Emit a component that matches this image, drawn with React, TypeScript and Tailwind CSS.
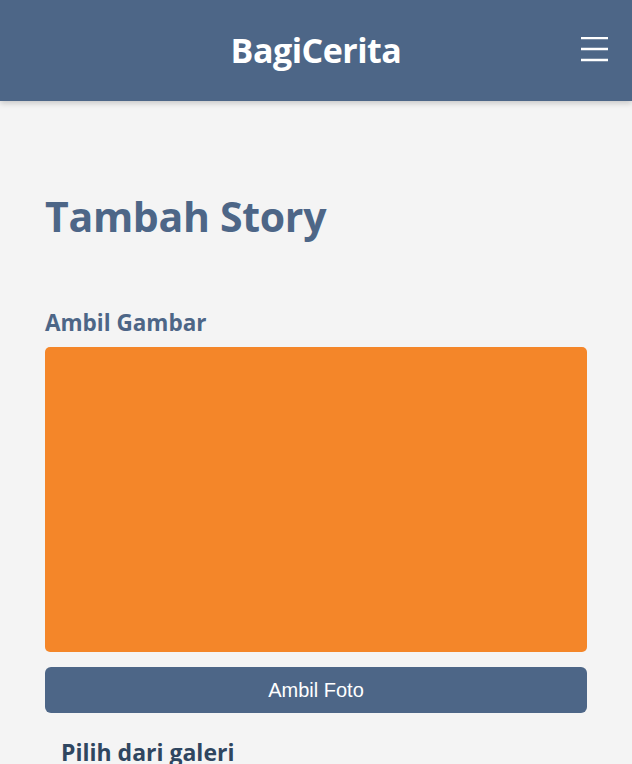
export default function App() {
  return (
    <div className="min-h-screen bg-[#f4f4f4]" style={{ fontFamily: '"Open Sans", "Noto Sans", sans-serif' }}>
      <header className="relative flex h-[101px] items-center justify-center bg-[#4d6687] shadow-[0_2px_6px_rgba(0,0,0,0.2)]">
        <h1 className="text-[34px] font-bold text-white tracking-[-0.5px]">BagiCerita</h1>
        <button className="absolute right-[24px] top-[37px] text-white" aria-label="Menu">
          <svg width="27" height="25" viewBox="0 0 27 25" fill="none" stroke="currentColor" strokeWidth="2.4">
            <path d="M0 1h27M0 12h27M0 23h27" />
          </svg>
        </button>
      </header>

      <main className="px-[45px] pt-[90px]">
        <h2 className="text-[41px] font-bold leading-tight text-[#4d6687] tracking-[-0.3px]">Tambah Story</h2>

        <section className="mt-[64px]">
          <label className="block text-[22.5px] font-bold text-[#4d6687]">Ambil Gambar</label>
          <div className="mt-[7px] h-[305px] w-full rounded-[5px] bg-[#f48629]" />
          <button
            className="mt-[15px] h-[46px] w-full rounded-[6px] bg-[#4d6687] text-[20px] text-white"
            style={{ fontFamily: '"Liberation Sans", Arial, sans-serif' }}
          >
            Ambil Foto
          </button>
          <h3 className="mt-[22px] pl-[16px] text-[23px] font-bold text-[#2f4660]">Pilih dari galeri</h3>
        </section>
      </main>
    </div>
  )
}
